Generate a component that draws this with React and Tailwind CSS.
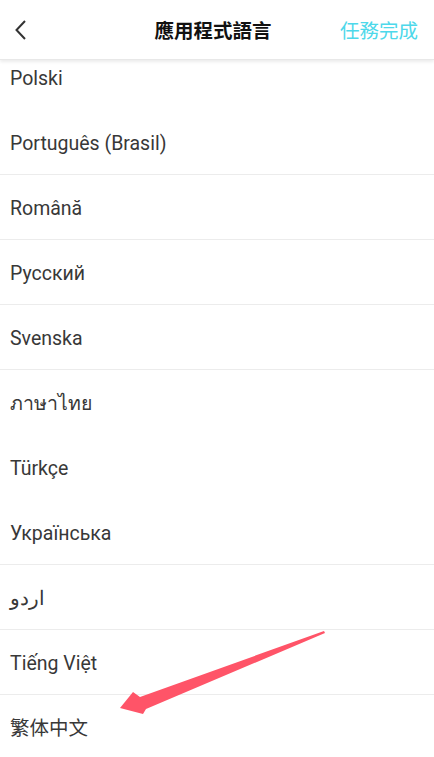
import React from "react";

const rows = [
  { t: "Polski", b: false },
  { t: "Português (Brasil)", b: true },
  { t: "Română", b: true },
  { t: "Русский", b: true },
  { t: "Svenska", b: true },
  { t: "ภาษาไทย", b: false },
  { t: "Türkçe", b: false },
  { t: "Українська", b: true },
  { t: "اردو", b: true },
  { t: "Tiếng Việt", b: true },
  { t: "繁体中文", b: false },
];

export default function App() {
  return (
    <div className="relative w-[434px] h-[757px] overflow-hidden bg-white" style={{ fontFamily: "Roboto, 'Noto Sans', 'Noto Sans CJK TC', sans-serif" }}>
      <div className="relative z-10 h-[60px] bg-white flex items-center justify-between px-[12px] shadow-[0_2px_3px_rgba(0,0,0,0.08)] border-b border-[#e8e8e8]">
        <svg width="16" height="22" viewBox="0 0 16 22" className="ml-[1px]">
          <path d="M12 2 L3.5 11 L12 20" fill="none" stroke="#333" strokeWidth="2" />
        </svg>
        <div className="absolute left-0 right-[8px] text-center text-[19.5px] font-bold text-[#111] pointer-events-none" style={{ fontFamily: "'Noto Sans CJK TC', sans-serif" }}>應用程式語言</div>
        <div className="text-[19.5px] text-[#4dd8ea] mr-[4px]" style={{ fontFamily: "'Noto Sans CJK TC', sans-serif" }}>任務完成</div>
      </div>
      <div className="-mt-[15px] flex flex-col">
        {rows.map((r, i) => (
          <div key={i} className={`h-[65px] flex items-center pl-[10px] pt-[4px] text-[19.5px] text-[#383838] ${r.b ? "border-b border-[#ececec]" : "border-b border-transparent"}`}>
            <span style={{ fontFamily: "Roboto, 'Noto Sans', 'Noto Sans CJK TC', sans-serif" }}>{r.t}</span>
          </div>
        ))}
      </div>
      <svg className="absolute left-0 top-0 z-20" width="434" height="757" viewBox="0 0 434 757">
        <polygon points="324,631 140,697 133,692 120,708 143,714 146,709 325,633" fill="#ff5468" />
      </svg>
    </div>
  );
}
